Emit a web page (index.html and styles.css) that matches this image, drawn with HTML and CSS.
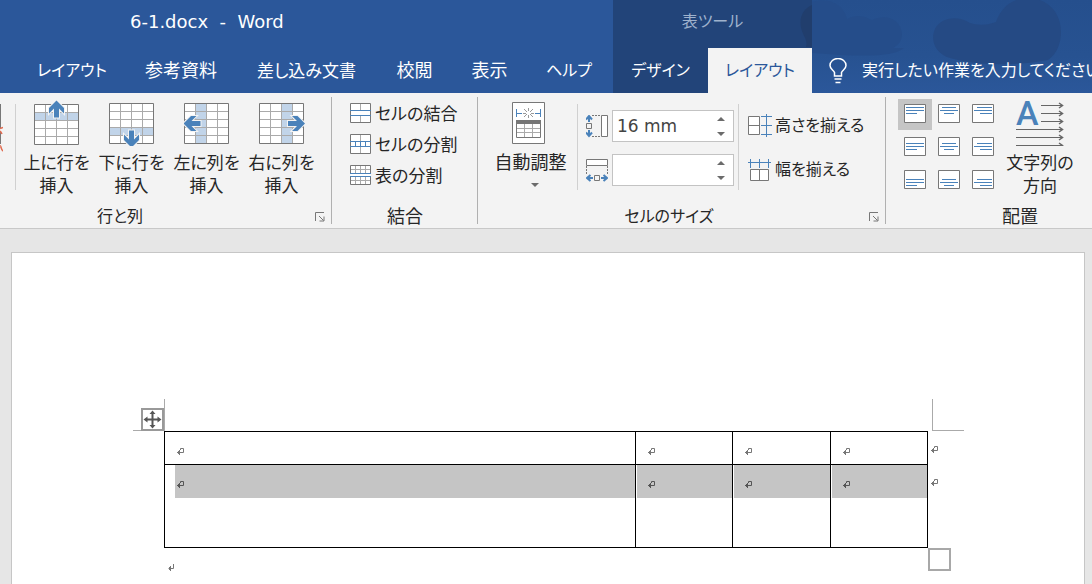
FILE: index.html
```
<!DOCTYPE html>
<html lang="ja">
<head>
<meta charset="utf-8">
<title>6-1.docx - Word</title>
<link rel="stylesheet" href="styles.css">
</head>
<body>
<svg class="defs" aria-hidden="true">
  <defs>
    <symbol id="mark" viewBox="0 0 8 8"><path d="M4.500 2V.5H7.500V4.500H1.500M3.500 2v5M2.500 3v3M1.500 4v1" fill="none" stroke="currentColor"/></symbol>
    <symbol id="launcher" viewBox="0 0 10 10"><path d="M.5 9V.5H9M4 4l4.500 4.500M9 4.500V9H4.500" fill="none" stroke="#777"/></symbol>
    <symbol id="up" viewBox="0 0 8 4"><path d="M0 4L4 0l4 4z" fill="#6b6b6b"/></symbol>
    <symbol id="down" viewBox="0 0 8 4"><path d="M0 0h8L4 4z" fill="#6b6b6b"/></symbol>
  </defs>
</svg>
<header class="header">
  <svg class="art" viewBox="0 0 292 93" aria-hidden="true">
    <defs><linearGradient id="fade" x1="0" y1="0" x2="0" y2="1"><stop offset="0" stop-color="#254f8d"/><stop offset=".6" stop-color="#275291"/><stop offset="1" stop-color="#2b579a"/></linearGradient></defs>
    <path d="M12 0h280v93H12z" fill="url(#fade)"/>
    <path d="M12 2c18-5 32 3 35 17 12-7 22 0 25 1 15-7 29 0 30 14 0 8-5 12-9 14h11c-10 9-40 9-92 5z" fill="#254d8a"/>
    <path d="M150 58c-15-4-21-19-14-31 8-11 24-11 34-4 8 2 14 3 26-1 5-15 17-24 32-24 19 0 33 14 33 34 0 11-4 22-13 28-30 6-70 6-98-2z" fill="#254a84"/>
  </svg>
  <div class="main-head">
    <div class="title">6-1.docx&nbsp; -&nbsp; Word</div>
    <nav class="tabs">
      <button class="kana">レイアウト</button><button>参考資料</button><button class="mixed">差し込み文書</button><button>校閲</button><button>表示</button><button class="kana">ヘルプ</button>
    </nav>
  </div>
  <div class="context">
    <svg class="context-art" viewBox="0 0 12 48" aria-hidden="true"><path d="M12 5C2 9-2 20 2 31c2 6 6 10 4 16h6z" fill="#213e6d"/></svg>
    <div class="context-title kana">表ツール</div>
    <nav class="context-tabs"><button class="kana">デザイン</button><button class="kana active">レイアウト</button></nav>
  </div>
  <button class="tell kana">
    <svg width="18" height="26" viewBox="0 0 18 26" fill="none" stroke="#fff" stroke-width="1.500"><path d="M5.500 18v-3.500C4.500 12 1 11 1 7.500a8 7 0 0 1 16 0c0 3.500-3.500 4.500-4.500 7V18zM5.500 21h7M6.500 24.500h5"/></svg>
    <span>実行したい作業を入力してください</span>
  </button>
</header>

<section class="ribbon">
  <div class="group group-rows">
    <div class="tools">
      <div class="clipped"><svg width="3" height="50" viewBox="0 0 3 50" fill="none"><path d="M.5 0v24M.5 28v12" stroke="#777"/><path d="M0 24.500l3-1M0 27c0 0 1 1 2 3M0 42c1-1 1 4 3 5" stroke="#e06a4f" stroke-width="1.500"/></svg></div>
      <button class="big">
        <svg width="46" height="46" viewBox="0 0 46 46"><path d="M.5 4.500h44v40H.5z" fill="#fff"/><path d="M1 13h43v8H1z" fill="#c1d4e9"/><path d="M1 12.500h43M1 20.500h43M1 28.500h43M1 36.500h43M11.500 5v39M22.500 5v39M33.500 5v39" stroke="#aaa"/><path d="M.5 4.500h44v40H.5z" fill="none" stroke="#777"/><path d="M22.500 .5l7.500 7.500v5.500l-5-5v9h-5v-9l-5 5V8z" fill="#4a82ba" stroke="#f3f3f3" stroke-width="2" paint-order="stroke"/></svg>
        <span>上に行を<br>挿入</span></button>
      <button class="big">
        <svg width="46" height="46" viewBox="0 0 46 46"><path d="M.5 3.500h44v40H.5z" fill="#fff"/><path d="M1 28h43v7H1z" fill="#c1d4e9"/><path d="M1 11.500h43M1 19.500h43M1 27.500h43M1 35.500h43M11.500 4v39M22.500 4v39M33.500 4v39" stroke="#aaa"/><path d="M.5 3.500h44v40H.5z" fill="none" stroke="#777"/><path d="M22.500 47.500L30 40v-5.500l-5 5v-9h-5v9l-5-5V40z" fill="#4a82ba" stroke="#f3f3f3" stroke-width="2" paint-order="stroke"/></svg>
        <span>下に行を<br>挿入</span></button>
      <button class="big">
        <svg width="46" height="46" viewBox="0 0 46 46"><path d="M.5 3.500h44v40H.5z" fill="#fff"/><path d="M12 4h10v39H12z" fill="#c1d4e9"/><path d="M1 11.500h43M1 19.500h43M1 27.500h43M1 35.500h43M11.500 4v39M22.500 4v39M33.500 4v39" stroke="#aaa"/><path d="M.5 3.500h44v40H.5z" fill="none" stroke="#777"/><path d="M-.5 23.500L7 16h5.500l-5 5h9v5h-9l5 5H7z" fill="#4a82ba" stroke="#f3f3f3" stroke-width="2" paint-order="stroke"/></svg>
        <span>左に列を<br>挿入</span></button>
      <button class="big">
        <svg width="46" height="46" viewBox="0 0 46 46"><path d="M.5 3.500h44v40H.5z" fill="#fff"/><path d="M23 4h10v39H23z" fill="#c1d4e9"/><path d="M1 11.500h43M1 19.500h43M1 27.500h43M1 35.500h43M11.500 4v39M22.500 4v39M33.500 4v39" stroke="#aaa"/><path d="M.5 3.500h44v40H.5z" fill="none" stroke="#777"/><path d="M46 23.500L38.500 16H33l5 5h-9v5h9l-5 5h5.500z" fill="#4a82ba" stroke="#f3f3f3" stroke-width="2" paint-order="stroke"/></svg>
        <span>右に列を<br>挿入</span></button>
    </div>
    <div class="label kana"><span>行と列</span><button class="launcher" aria-label="行と列の設定"><svg width="10" height="10"><use href="#launcher"/></svg></button></div>
  </div>

  <div class="group group-merge">
    <div class="tools list">
      <button class="small"><svg width="21" height="21" viewBox="0 0 21 21"><path d="M.5.5h20v19H.5z" fill="#fff" stroke="#777"/><path d="M10.500 1v6M10.500 13v6" stroke="#aaa"/><path d="M0 7.500h21M0 12.500h21" stroke="#4a82ba"/></svg><span>セルの結合</span></button>
      <button class="small"><svg width="21" height="21" viewBox="0 0 21 21"><path d="M.5.5h20v19H.5z" fill="#fff" stroke="#777"/><path d="M10.500 1v6M10.500 13v6" stroke="#aaa"/><path d="M0 7.500h21M0 12.500h21M5.500 8v4M10.500 8v4M15.500 8v4" stroke="#4a82ba"/></svg><span>セルの分割</span></button>
      <button class="small"><svg width="21" height="21" viewBox="0 0 21 21"><path d="M.5.5h20v19H.5z" fill="#fff"/><path d="M1 4.500h19M1 15.500h19M5.500 1v7M10.500 1v7M15.500 1v7M5.500 12v7M10.500 12v7M15.500 12v7" stroke="#aaa"/><path d="M.5 8V.5h20V8M.5 12v7.500h20V12" fill="none" stroke="#777"/><path d="M0 8.500h21M0 11.500h21" stroke="#4a82ba"/></svg><span>表の分割</span></button>
    </div>
    <div class="label"><span>結合</span></div>
  </div>

  <div class="group group-size">
    <div class="tools">
      <button class="big autofit">
        <svg width="38" height="46" viewBox="0 0 38 46" fill="none"><path d="M.5 2.500h32v41H.5z" fill="#fff" stroke="#777"/><path d="M4.500 9v8M28.500 9v8M5 13.500h5M23 13.500h5" stroke="#4a82ba"/><path d="M12 9l3 3M21 9l-3 3M12 17l3-3M21 17l-3-3M11 13.500h3M19 13.500h3M16.500 8v3M16.500 15v3" stroke="#999"/><path d="M4 20h25v4H4z" fill="#777"/><path d="M5 28.500h23M5 32.500h23M12.500 24v13M20.500 24v13" stroke="#aaa"/><path d="M4.500 20v17.500h24V20" stroke="#777"/></svg>
        <span>自動調整</span><svg class="arrow" width="8" height="4"><use href="#down"/></svg></button>
      <div class="sizes">
        <div class="size-row">
          <label for="height" aria-label="高さ"><svg width="22" height="23" viewBox="0 0 22 23" fill="none"><path d="M15.500.5h6v21h-6z" fill="#fff" stroke="#777"/><path d="M6 .5h9M6 21.500h9" stroke="#777" stroke-dasharray="2 1"/><path d="M.5 8.500h5v5h-5z" stroke="#777"/><path d="M3 7V2M0 4.500L3 1l3 3.500M3 15v5M0 17.500L3 21l3-3.500" stroke="#4a82ba" stroke-width="2"/></svg></label>
          <span class="spin"><input id="height" type="text" value="16 mm"><span class="steps"><button aria-label="増やす"><svg width="8" height="4"><use href="#up"/></svg></button><button aria-label="減らす"><svg width="8" height="4"><use href="#down"/></svg></button></span></span>
        </div>
        <div class="size-row">
          <label for="width" aria-label="幅"><svg width="22" height="23" viewBox="0 0 22 23" fill="none"><path d="M.5.500h21v6H.5z" fill="#fff" stroke="#777"/><path d="M.5 7v9M21.500 7v9" stroke="#777" stroke-dasharray="2 1"/><path d="M8.500 16.500h5v5h-5z" stroke="#777"/><path d="M7 19H2M4.500 16L1 19l3.500 3M15 19h5M17.500 16l3.500 3-3.500 3" stroke="#4a82ba" stroke-width="2"/></svg></label>
          <span class="spin"><input id="width" type="text" value=""><span class="steps"><button aria-label="増やす"><svg width="8" height="4"><use href="#up"/></svg></button><button aria-label="減らす"><svg width="8" height="4"><use href="#down"/></svg></button></span></span>
        </div>
      </div>
      <div class="distribute">
        <button class="small kana"><svg width="24" height="24" viewBox="0 0 24 24" fill="none"><path d="M.5 2.500h11v18H.5zM0 11.500h12" fill="#fff" stroke="#777"/><path d="M18.500 0v23M13 2.500h11M13 11.500h11M13 20.500h11" stroke="#4a82ba"/></svg><span>高さを揃える</span></button>
        <button class="small kana"><svg width="24" height="24" viewBox="0 0 24 24" fill="none"><path d="M2.500 11.500h18v11h-18zM11.500 11v12" fill="#fff" stroke="#777"/><path d="M0 4.500h23M2.500 1v9M11.500 1v9M20.500 1v9" stroke="#4a82ba"/></svg><span>幅を揃える</span></button>
      </div>
    </div>
    <div class="label kana"><span>セルのサイズ</span><button class="launcher" aria-label="セルのサイズの設定"><svg width="10" height="10"><use href="#launcher"/></svg></button></div>
  </div>

  <div class="group group-align">
    <div class="tools">
      <div class="aligns">
        <button class="selected" aria-label="上揃え(左)"><svg width="22" height="19" viewBox="0 0 22 19"><path d="M.5.5h21v18H.5z" fill="#fff" stroke="#777"/><path d="M2 3.500h18M2 6.500h18M2 9.500h11" stroke="#4a82ba"/></svg></button>
        <button aria-label="上揃え(中央)"><svg width="22" height="19" viewBox="0 0 22 19"><path d="M.5.5h21v18H.5z" fill="#fff" stroke="#777"/><path d="M4 3.500h14M2 6.500h18M6 9.500h10" stroke="#4a82ba"/></svg></button>
        <button aria-label="上揃え(右)"><svg width="22" height="19" viewBox="0 0 22 19"><path d="M.5.5h21v18H.5z" fill="#fff" stroke="#777"/><path d="M5 3.500h15M2 6.500h18M8 9.500h12" stroke="#4a82ba"/></svg></button>
        <button aria-label="中央揃え(左)"><svg width="22" height="19" viewBox="0 0 22 19"><path d="M.5.5h21v18H.5z" fill="#fff" stroke="#777"/><path d="M2 6.500h18M2 9.500h18M2 12.500h11" stroke="#4a82ba"/></svg></button>
        <button aria-label="中央揃え"><svg width="22" height="19" viewBox="0 0 22 19"><path d="M.5.5h21v18H.5z" fill="#fff" stroke="#777"/><path d="M4 6.500h14M2 9.500h18M6 12.500h10" stroke="#4a82ba"/></svg></button>
        <button aria-label="中央揃え(右)"><svg width="22" height="19" viewBox="0 0 22 19"><path d="M.5.5h21v18H.5z" fill="#fff" stroke="#777"/><path d="M5 6.500h15M2 9.500h18M8 12.500h12" stroke="#4a82ba"/></svg></button>
        <button aria-label="下揃え(左)"><svg width="22" height="19" viewBox="0 0 22 19"><path d="M.5.5h21v18H.5z" fill="#fff" stroke="#777"/><path d="M2 9.500h18M2 12.500h18M2 15.500h11" stroke="#4a82ba"/></svg></button>
        <button aria-label="下揃え(中央)"><svg width="22" height="19" viewBox="0 0 22 19"><path d="M.5.5h21v18H.5z" fill="#fff" stroke="#777"/><path d="M4 9.500h14M2 12.500h18M6 15.500h10" stroke="#4a82ba"/></svg></button>
        <button aria-label="下揃え(右)"><svg width="22" height="19" viewBox="0 0 22 19"><path d="M.5.5h21v18H.5z" fill="#fff" stroke="#777"/><path d="M5 9.500h15M2 12.500h18M8 15.500h12" stroke="#4a82ba"/></svg></button>
      </div>
      <button class="big">
        <svg width="48" height="46" viewBox="0 0 48 46" fill="none"><text x="0" y="25" class="glyph">A</text><path d="M25 5.500h21M25 13.500h21M25 21.500h21M0 29.500h46M0 37.500h46M0 45.500h46" stroke="#666"/><path d="M43 3l3.500 2.500L43 8M43 11l3.500 2.500L43 16M43 19l3.500 2.500L43 24M43 27l3.500 2.500L43 32M43 35l3.500 2.500L43 40M43 43l3.500 2.500L43 48" stroke="#666" stroke-width="1.500"/></svg>
        <span>文字列の<br>方向</span></button>
      <button class="big next"><span>セルの</span></button>
    </div>
    <div class="label"><span>配置</span></div>
  </div>
</section>

<main class="workspace">
  <div class="page">
    <div class="body-area">
      <div class="corners"><i class="corner left"></i><i class="corner right"></i></div>
      <svg class="move" width="23" height="23" viewBox="0 0 23 23" fill="none"><path d="M1 1h21v21H1z" fill="#fff" stroke="#999" stroke-width="2"/><path d="M11.500 5v13M5 11.500h13" stroke="#555" stroke-width="2"/><path d="M11.500 2.500l3 3.500h-6zM11.500 20.500l3-3.500h-6zM2.500 11.500l4-3v6zM20.500 11.500l-4-3v6z" fill="#555"/></svg>
      <div class="table-row">
        <table class="doc-table">
          <colgroup><col class="wide"><col class="narrow"><col class="narrow"><col class="narrow"></colgroup>
          <tr class="first"><td class="lead"><svg class="mark"><use href="#mark"/></svg></td><td><svg class="mark"><use href="#mark"/></svg></td><td><svg class="mark"><use href="#mark"/></svg></td><td><svg class="mark"><use href="#mark"/></svg></td></tr>
          <tr class="second"><td class="lead"><div class="shade"><svg class="mark"><use href="#mark"/></svg></div></td><td><div class="shade"><svg class="mark"><use href="#mark"/></svg></div></td><td><div class="shade"><svg class="mark"><use href="#mark"/></svg></div></td><td><div class="shade"><svg class="mark"><use href="#mark"/></svg></div></td></tr>
        </table>
        <div class="row-ends"><svg class="mark"><use href="#mark"/></svg><svg class="mark"><use href="#mark"/></svg></div>
        <i class="resize"></i>
      </div>
      <svg class="mark last"><path d="M6.500 0V4.500H1.500M3.500 2v5M2.500 3v3" fill="none" stroke="currentColor"/></svg>
    </div>
  </div>
</main>
</body>
</html>
```
FILE: styles.css
```
* { box-sizing: border-box; }
body {
  margin: 0;
  height: 100vh;
  display: flex;
  flex-direction: column;
  overflow: hidden;
  background: #e6e6e6;
  color: #262626;
  font: 18px/23px "Noto Sans", "Noto Sans CJK JP", sans-serif;
  font-feature-settings: "palt";
}
button {
  padding: 0;
  border: 0;
  background: none;
  color: inherit;
  font: inherit;
  font-feature-settings: inherit;
  white-space: nowrap;
}
svg { display: block; flex: none; }
.defs { position: absolute; width: 0; height: 0; }
.mixed { font-size: 17px; }
.kana { font-size: 16px; }

.header {
  position: relative;
  display: flex;
  flex: none;
  height: 93px;
  background: #2b579a;
  color: #fff;
  overflow: hidden;
}
.art { position: absolute; right: 0; top: 0; width: 292px; height: 93px; }
.main-head { flex: 0 0 613px; }
.title { height: 48px; padding: 10px 0 0 130px; font-family: "DejaVu Sans", sans-serif; font-size: 18px; }
.tabs { display: grid; grid-template-columns: 108px 110px 141px 75px 75px 84px; height: 45px; padding-left: 18px; }
.context { position: relative; flex: 0 0 199px; background: #224479; }
.context-art { position: absolute; right: 0; top: 0; width: 12px; height: 48px; }
.context-title { height: 48px; padding-top: 10px; text-align: center; color: #9fb2cd; }
.context-tabs { display: grid; grid-template-columns: 95px 104px; height: 45px; }
.active { background: #f3f3f3; color: #2b579a; }
.tell { position: relative; display: flex; align-items: center; gap: 15px; height: 45px; margin: 48px 0 0 17px; }

.ribbon {
  display: flex;
  flex: none;
  height: 136px;
  background: #f3f3f3;
  border-bottom: 1px solid #c8c8c8;
  overflow: hidden;
}
.group { position: relative; display: flex; flex-direction: column; flex: none; }
.group:not(.group-align)::after {
  content: "";
  position: absolute;
  right: 0;
  top: 4px;
  bottom: 4px;
  border-right: 1px solid #b0b0b0;
}
.group-rows { width: 332px; }
.group-merge { width: 146px; }
.group-size { width: 408px; }
.group-align { width: 268px; }
.tools { display: flex; height: 112px; }
.label { position: relative; display: flex; justify-content: center; height: 23px; }
.group-rows .label { padding-right: 92px; }
.group-size .label { padding-right: 26px; }
.launcher { position: absolute; right: 7px; top: 7px; }
.clipped { width: 16px; height: 86px; margin: 11px 3px 0 0; border-right: 1px solid #d0d0d0; }
.big { display: flex; flex-direction: column; align-items: center; width: 75px; padding-top: 7px; font-size: 17px; }
.big span { margin-top: 5px; }
.list { flex-direction: column; padding: 5px 0 0 18px; }
.small { display: flex; align-items: center; gap: 4px; height: 31px; }
.list .small { font-size: 17px; }
.autofit { width: 99px; padding-left: 6px; font-size: 18px; }
.arrow { margin-top: 9px; }
.autofit .arrow { margin-left: 8px; }
.sizes {
  display: flex;
  flex-direction: column;
  gap: 12px;
  width: 162px;
  height: 86px;
  margin-top: 11px;
  padding: 6px 4px 0 8px;
  border: solid #d0d0d0;
  border-width: 0 1px;
}
.size-row { display: flex; align-items: center; gap: 4px; }
.spin { display: flex; width: 122px; height: 32px; border: 1px solid #c3c3c3; background: #fff; }
.spin input {
  width: 96px;
  padding: 0 0 0 4px;
  border: 0;
  outline: 0;
  background: none;
  color: #444;
  font: 17px "DejaVu Sans", sans-serif;
}
.steps { display: flex; flex-direction: column; justify-content: center; gap: 11px; padding-left: 8px; }
.distribute { display: flex; flex-direction: column; gap: 13px; padding: 17px 0 0 9px; }
.distribute .small { gap: 3px; }
.aligns { display: grid; grid-template-columns: 34px 34px 34px; grid-auto-rows: 31px; row-gap: 2px; align-content: start; padding: 6px 2px 0 12px; }
.aligns button { display: flex; justify-content: center; padding-top: 5px; }
.aligns .selected { background: #c5c5c5; }
.group-align .big { width: 77px; }
.glyph { font: 500 34px Roboto, sans-serif; fill: #4a82ba; }
.group-align .next { padding: 53px 0 0 5px; }

.workspace { flex: 1; padding: 23px 7px 0 11px; }
.page { height: 100%; border: 1px solid #c6c6c6; border-bottom: 0; background: #fff; padding: 146px 152px 0; }
.body-area { position: relative; }
.corners { display: flex; justify-content: space-between; height: 32px; margin: 0 -32px 0 -31px; }
.corner { width: 32px; border-bottom: 1px solid #aaa; }
.corner.left { border-right: 1px solid #aaa; }
.corner.right { border-left: 1px solid #aaa; }
.move { position: absolute; left: -23px; top: 9px; }
.table-row { position: relative; display: flex; }
.doc-table { flex: none; width: 764px; table-layout: fixed; border-collapse: collapse; }
.wide { width: 471px; }
.doc-table td { padding: 0; border: 1px solid #000; vertical-align: top; }
.mark { width: 8px; height: 8px; color: #777; }
.first { height: 33px; }
.first .mark { margin: 16px 0 0 11px; }
.second { height: 83px; }
.shade { height: 33px; margin-left: 1px; padding: 16px 0 0 10px; background: #c5c5c5; }
.lead .shade { margin-left: 10px; padding-left: 1px; }
.row-ends { display: flex; flex-direction: column; gap: 25px; padding: 15px 0 0 2px; }
.shade .mark { color: #555; }
.resize { position: absolute; left: 764px; top: 117px; width: 23px; height: 23px; border: 2px solid #a8a8a8; background: #fff; }
.last { margin: 16px 0 0 3px; }
```
